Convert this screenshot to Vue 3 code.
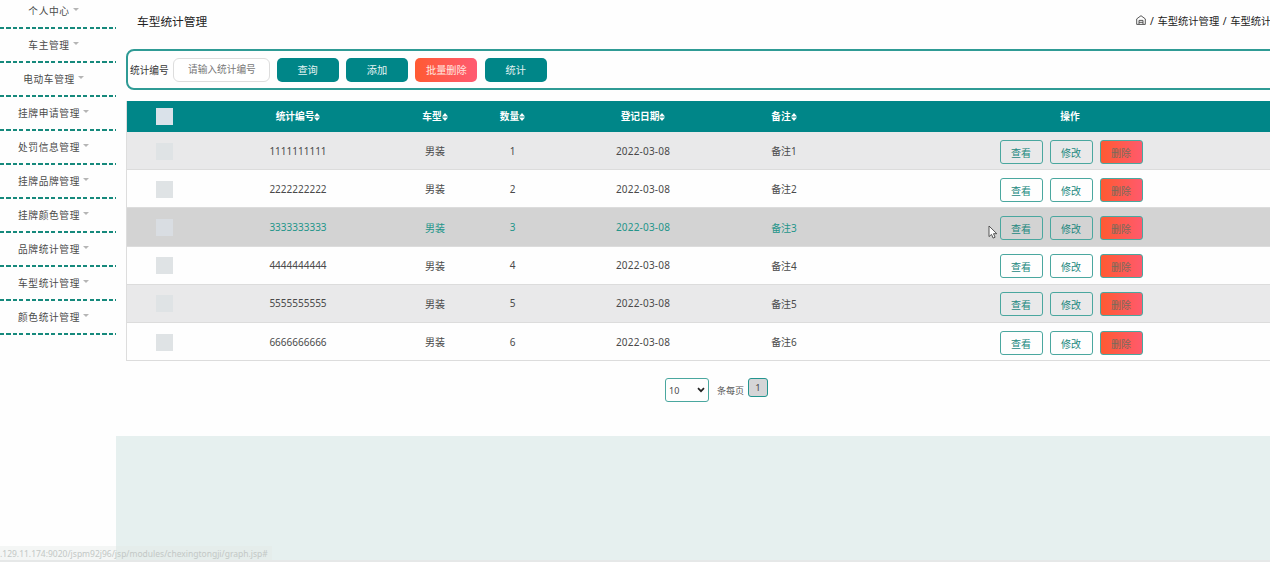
<script setup>
import { ref } from 'vue'

const menus = [
  '个人中心',
  '车主管理',
  '电动车管理',
  '挂牌申请管理',
  '处罚信息管理',
  '挂牌品牌管理',
  '挂牌颜色管理',
  '品牌统计管理',
  '车型统计管理',
  '颜色统计管理'
]

const columns = ['统计编号', '车型', '数量', '登记日期', '备注']

const rows = [
  { no: '1111111111', type: '男装', count: 1, date: '2022-03-08', note: '备注1' },
  { no: '2222222222', type: '男装', count: 2, date: '2022-03-08', note: '备注2' },
  { no: '3333333333', type: '男装', count: 3, date: '2022-03-08', note: '备注3' },
  { no: '4444444444', type: '男装', count: 4, date: '2022-03-08', note: '备注4' },
  { no: '5555555555', type: '男装', count: 5, date: '2022-03-08', note: '备注5' },
  { no: '6666666666', type: '男装', count: 6, date: '2022-03-08', note: '备注6' }
]

const hovered = ref(2)
const keyword = ref('')
</script>

<template>
  <div class="page">
    <aside class="sidebar">
      <div v-for="m in menus" :key="m" class="menu-item">
        <span class="menu-text">{{ m }}</span>
        <span class="menu-caret"></span>
      </div>
    </aside>

    <main class="main">
      <div class="content">
        <header class="top">
          <h1 class="title">车型统计管理</h1>
          <nav class="crumbs">
            <svg class="home" viewBox="0 0 10 10">
              <path d="M.7 9.4V3.9L5 .7l4.3 3.2v5.5zM3 9.2V5.4h4v3.8M3 7.3h4" />
            </svg>
            <span>/ 车型统计管理 / 车型统计</span>
          </nav>
        </header>

        <!-- 查询栏 -->
        <section class="search">
          <label class="search-label">统计编号</label>
          <input v-model="keyword" class="search-input" placeholder="请输入统计编号" />
          <button class="btn">查询</button>
          <button class="btn">添加</button>
          <button class="btn danger">批量删除</button>
          <button class="btn">统计</button>
        </section>

        <!-- 数据表格 -->
        <section class="table">
          <div class="row head">
            <div><span class="check"></span></div>
            <div v-for="c in columns" :key="c">
              {{ c }}<svg class="sort" viewBox="0 0 6 8"><path d="M0 3.4 3 0l3 3.4zM0 4.6h6L3 8z" /></svg>
            </div>
            <div>操作</div>
          </div>
          <div
            v-for="(r, i) in rows"
            :key="r.no"
            class="row"
            :class="{ hover: hovered === i }"
          >
            <div><span class="check"></span></div>
            <div>{{ r.no }}</div>
            <div>{{ r.type }}</div>
            <div>{{ r.count }}</div>
            <div class="date">{{ r.date }}</div>
            <div class="note">{{ r.note }}</div>
            <div class="ops">
              <button class="op">查看</button>
              <button class="op">修改</button>
              <button class="op del">删除</button>
            </div>
          </div>
        </section>

        <!-- 分页 -->
        <footer class="pager">
          <div class="size">
            <span>10</span>
            <svg viewBox="0 0 8 6"><path d="M1 1.2 4 4.2l3-3" /></svg>
          </div>
          <span class="per">条每页</span>
          <span class="current">1</span>
        </footer>
      </div>
    </main>

    <div class="status">.129.11.174:9020/jspm92j96/jsp/modules/chexingtongji/graph.jsp#</div>
    <div class="bottom-line"></div>

    <svg class="cursor" viewBox="0 0 10 14">
      <path d="M1 1v10.6l2.5-2.2 1.6 3.7 2-.9-1.6-3.5h3.3z" />
    </svg>
  </div>
</template>

<style>
body {
  margin: 0;
  overflow: hidden;
}
</style>

<style scoped>
.page {
  position: relative;
  display: flex;
  width: 1270px;
  height: 562px;
  overflow: hidden;
  background: #fefefe;
  color: #4a4a4a;
  font-family: "Noto Sans", "Noto Sans CJK SC", sans-serif;
  font-size: 10px;
}
.page * {
  box-sizing: border-box;
}
button,
input {
  font-family: inherit;
}

/* 侧边菜单 */
.sidebar {
  width: 116px;
  flex-shrink: 0;
  margin-top: -5px;
}
.menu-item {
  display: flex;
  align-items: center;
  justify-content: center;
  height: 34px;
  padding: 0 9px 3px 0;
  background: repeating-linear-gradient(90deg, #16897c 0 4.2px, transparent 4.2px 6.4px) 0 calc(100% - 0.5px) / 100% 2px no-repeat;
  color: #4a4a4a;
  font-size: 9.7px;
  letter-spacing: 0.65px;
}
.menu-caret {
  margin: -2px 0 0 3px;
  border: 3px solid transparent;
  border-top: 3px solid #b5b5b5;
  border-bottom: 0;
}

.main {
  width: 1200px;
  flex-shrink: 0;
  background: #e6f0ef;
}
.content {
  height: 436px;
  padding-left: 10px;
  background: #fefefe;
}
.top {
  display: flex;
  justify-content: space-between;
  align-items: center;
  height: 49px;
  padding: 0 0 9px 11px;
}
.title {
  margin: 0;
  color: #222;
  font-size: 11.7px;
  font-weight: 400;
}
.crumbs {
  display: flex;
  align-items: center;
  gap: 4px;
  width: 180px;
  color: #222;
  font-size: 10.3px;
  white-space: nowrap;
  word-spacing: 0.9px;
  flex-shrink: 0;
}
.home {
  width: 10px;
  height: 10px;
  fill: none;
  stroke: #444;
  stroke-width: 0.9;
}

/* 查询栏 */
.search {
  display: flex;
  align-items: center;
  height: 41px;
  padding-left: 2px;
  border: 2px solid #2f9b95;
  border-radius: 8px;
}
.search-label {
  width: 43px;
  color: #333;
  font-size: 9.7px;
  white-space: nowrap;
}
.search-input {
  width: 97px;
  height: 24px;
  margin-right: 6.6px;
  padding: 0 0 0 14px;
  border: 1px solid #ddd;
  border-radius: 6px;
  background: #fff;
  font-size: 9.7px;
  outline: none;
}
.search-input::placeholder {
  color: #777;
}
.btn {
  width: 62px;
  height: 24px;
  margin-right: 7.4px;
  padding: 0;
  border: 0;
  border-radius: 5px;
  background: #008688;
  color: #e4f4f3;
  font-size: 10.2px;
}
.btn.danger {
  background: linear-gradient(90deg, #ff5a32, #ff5a72);
  color: #ffe6e0;
}

/* 表格 */
.table {
  margin-top: 11px;
  border-left: 1px solid #ddd;
}
.row {
  display: grid;
  grid-template-columns: 74px 194px 80px 75px 186px 96px 476px;
  align-items: center;
  height: 38.22px;
  border-bottom: 1px solid #dcdcdc;
  background: #fefefe;
  text-align: center;
}
.row:nth-child(even) {
  background: #e9e9ea;
}
.row.hover {
  background: #d3d3d3;
  color: #23958a;
}
.row.head {
  height: 31px;
  border: 0;
  background: #008688;
  color: #fff;
  font-size: 9.7px;
  font-weight: 700;
}
.head > div {
  padding-bottom: 1px;
}
.check {
  display: block;
  width: 17px;
  height: 17px;
  margin: 1px auto 0;
  background: #dfe3e5;
}
.head .check {
  background: #dae2ea;
}
.hover .check {
  background: #d9dde2;
}
.date {
  letter-spacing: 0.2px;
}
.sort {
  width: 6px;
  height: 8px;
  vertical-align: -0.5px;
  fill: #fff;
}
.ops {
  display: flex;
  justify-content: center;
  gap: 7px;
  padding: 2px 0 0 2px;
}
.op {
  width: 43px;
  height: 24px;
  padding: 1px 0 0;
  border: 1px solid #4aa79f;
  border-radius: 3px;
  background: transparent;
  color: #23887f;
  font-size: 10px;
}
.op.del {
  background: linear-gradient(90deg, #ff5a32, #ff5a6c);
  color: #766c5c;
}

/* 分页 */
.pager {
  display: flex;
  align-items: flex-start;
  margin: 17px 0 0 539px;
}
.size {
  display: flex;
  align-items: center;
  justify-content: space-between;
  width: 44px;
  height: 24px;
  padding: 0 3px;
  border: 1px solid #4aa79f;
  border-radius: 3px;
  font-size: 9px;
}
.size svg {
  width: 8px;
  height: 6px;
  fill: none;
  stroke: #222;
  stroke-width: 1.7;
}
.per {
  margin: 6px 4px 0 8px;
  color: #555;
  font-size: 9px;
  line-height: 14px;
}
.current {
  width: 20px;
  height: 19px;
  border: 1px solid #23958f;
  border-radius: 3px;
  background: #d5d5d7;
  font-size: 9.5px;
  line-height: 17px;
  text-align: center;
}

/* 浏览器状态栏提示 */
.status {
  position: absolute;
  left: 0;
  bottom: 2px;
  width: 272px;
  height: 14px;
  background: rgba(225, 232, 230, 0.35);
  color: #c3c8c6;
  font-size: 8.5px;
  line-height: 16px;
  white-space: nowrap;
}
.bottom-line {
  position: absolute;
  left: 0;
  right: 0;
  bottom: 0;
  height: 2px;
  background: #e6e8e8;
}
.cursor {
  position: absolute;
  left: 988px;
  top: 225px;
  width: 10px;
  height: 14px;
  fill: #fff;
  stroke: #444;
  stroke-width: 0.9;
}
</style>
